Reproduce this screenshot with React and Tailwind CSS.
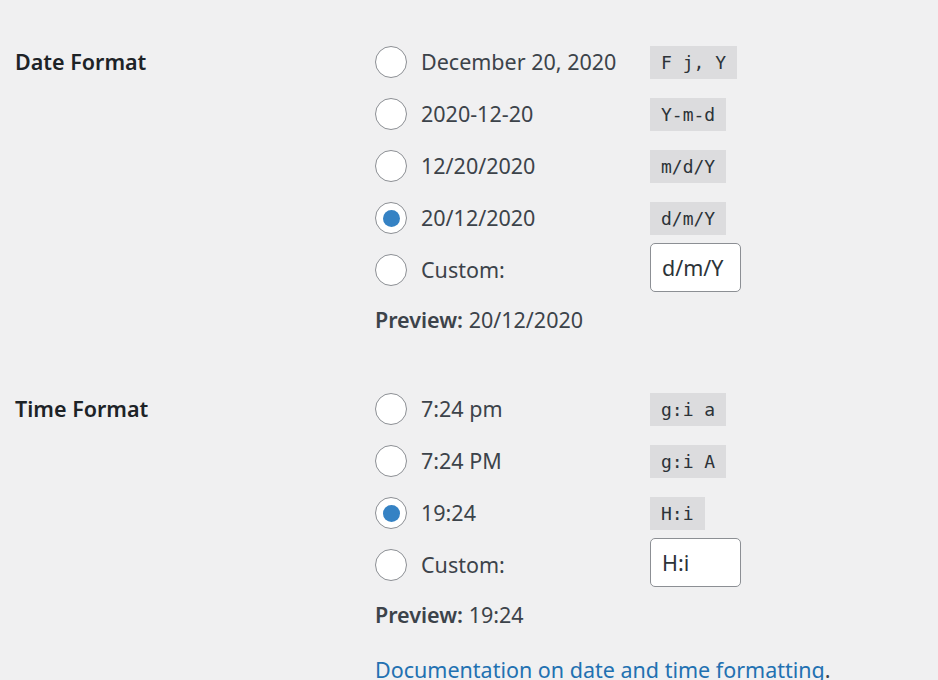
import { useState } from "react";

const dateFormats = [
  { label: "December 20, 2020", code: "F j, Y" },
  { label: "2020-12-20", code: "Y-m-d" },
  { label: "12/20/2020", code: "m/d/Y" },
  { label: "20/12/2020", code: "d/m/Y" },
];

const timeFormats = [
  { label: "7:24 pm", code: "g:i a" },
  { label: "7:24 PM", code: "g:i A" },
  { label: "19:24", code: "H:i" },
];

function Radio({ checked, onClick }) {
  return (
    <button
      onClick={onClick}
      className="w-[32px] h-[32px] rounded-full border border-[#8c8f94] bg-white flex items-center justify-center shrink-0"
    >
      {checked && <span className="w-[17px] h-[17px] rounded-full bg-[#3582c4]" />}
    </button>
  );
}

function FormatGroup({ title, formats, custom, preview }) {
  const [selected, setSelected] = useState(formats.findIndex((f) => f.code === custom));
  const [value, setValue] = useState(custom);

  return (
    <div className="flex">
      <div className="w-[360px] h-[52px] flex items-center font-semibold text-[#1d2327]">
        {title}
      </div>
      <div className="flex flex-col">
        {formats.map((f, i) => (
          <div key={f.code} className="h-[52px] flex items-center">
            <div className="w-[275px] flex items-center gap-[14px]">
              <Radio checked={selected === i} onClick={() => setSelected(i)} />
              <span>{f.label}</span>
            </div>
            <code className="bg-[#dcdcde] px-[11px] h-[33px] flex items-center text-[18px] text-[#2c3338] font-['DejaVu_Sans_Mono',monospace]">
              {f.code}
            </code>
          </div>
        ))}
        <div className="h-[52px] flex items-center">
          <div className="w-[275px] flex items-center gap-[14px]">
            <Radio checked={selected === -1} onClick={() => setSelected(-1)} />
            <span>Custom:</span>
          </div>
          <input
            value={value}
            onChange={(e) => setValue(e.target.value)}
            className="w-[91px] h-[49px] -mt-[6px] bg-white border border-[#8c8f94] rounded-[5px] px-[11px] text-[#2c3338] outline-none"
          />
        </div>
        <p className="mt-[10px] leading-[28px]">
          <span className="font-semibold">Preview:</span> {preview}
        </p>
      </div>
    </div>
  );
}

export default function App() {
  return (
    <div className="h-screen bg-[#f0f0f1] text-[#3c434a] text-[21.5px] font-['Noto_Sans',sans-serif] pl-[15px] pt-[36px] overflow-hidden">
      <FormatGroup title="Date Format" formats={dateFormats} custom="d/m/Y" preview="20/12/2020" />
      <div className="mt-[49px]">
        <FormatGroup title="Time Format" formats={timeFormats} custom="H:i" preview="19:24" />
      </div>
      <div className="pl-[360px] mt-[27px] leading-[28px]">
        <a href="#" className="text-[#2271b1] underline">
          Documentation on date and time formatting
        </a>
        .
      </div>
    </div>
  );
}
